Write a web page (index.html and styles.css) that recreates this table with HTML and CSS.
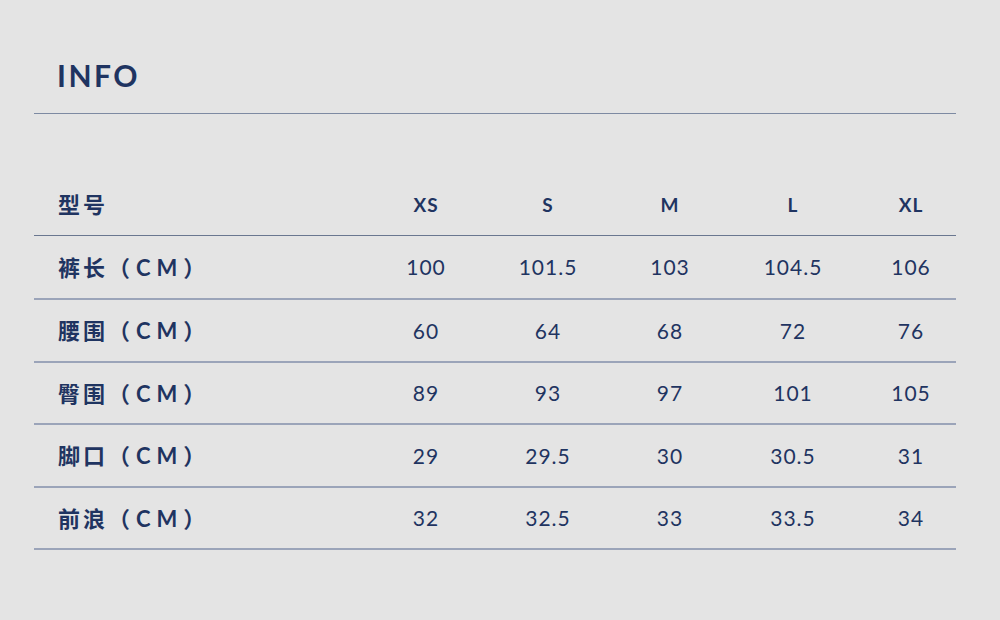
FILE: index.html
```html
<!DOCTYPE html>
<html lang="zh-CN">
<head>
<meta charset="utf-8">
<title>INFO</title>
<link rel="stylesheet" href="styles.css">
</head>
<body>
<main class="page">
  <header class="title-bar">
    <h1 class="title">INFO</h1>
  </header>
  <section class="table">
    <div class="row head">
      <div class="cell label">型号</div>
      <div class="cell">XS</div>
      <div class="cell">S</div>
      <div class="cell">M</div>
      <div class="cell">L</div>
      <div class="cell last">XL</div>
    </div>
    <div class="row">
      <div class="cell label">裤长<span class="unit">（CM）</span></div>
      <div class="cell">100</div>
      <div class="cell">101.5</div>
      <div class="cell">103</div>
      <div class="cell">104.5</div>
      <div class="cell last">106</div>
    </div>
    <div class="row">
      <div class="cell label">腰围<span class="unit">（CM）</span></div>
      <div class="cell">60</div>
      <div class="cell">64</div>
      <div class="cell">68</div>
      <div class="cell">72</div>
      <div class="cell last">76</div>
    </div>
    <div class="row">
      <div class="cell label">臀围<span class="unit">（CM）</span></div>
      <div class="cell">89</div>
      <div class="cell">93</div>
      <div class="cell">97</div>
      <div class="cell">101</div>
      <div class="cell last">105</div>
    </div>
    <div class="row">
      <div class="cell label">脚口<span class="unit">（CM）</span></div>
      <div class="cell">29</div>
      <div class="cell">29.5</div>
      <div class="cell">30</div>
      <div class="cell">30.5</div>
      <div class="cell last">31</div>
    </div>
    <div class="row">
      <div class="cell label">前浪<span class="unit">（CM）</span></div>
      <div class="cell">32</div>
      <div class="cell">32.5</div>
      <div class="cell">33</div>
      <div class="cell">33.5</div>
      <div class="cell last">34</div>
    </div>
  </section>
</main>
</body>
</html>
```

FILE: styles.css
```css
html, body {
  margin: 0;
  padding: 0;
  background: #e4e4e4;
}

body {
  font-family: Lato, "Noto Sans CJK SC", sans-serif;
  color: #1f3461;
}

.page {
  width: 922px;
  margin-left: 34px;
  padding-top: 57px;
}

.title-bar {
  padding: 0 0 20px 23px;
  border-bottom: 1px solid #7d8aa2;
}

.title {
  margin: 0;
  font-size: 30px;
  line-height: 36px;
  font-weight: 700;
  letter-spacing: 2.5px;
}

.table {
  margin-top: 60px;
}

.row {
  display: grid;
  grid-template-columns: 332px 120px 124px 120px 126px 100px;
  height: 60px;
  align-items: center;
  border-bottom: 2px solid #9ba4b9;
}

.row.head {
  height: 61px;
  border-bottom: 1px solid #6a7790;
}

.row:nth-child(2) {
  height: 62px;
}

.row:nth-child(3),
.row:nth-child(5) {
  height: 61px;
}

.cell {
  text-align: center;
  font-size: 21px;
  font-weight: 400;
  letter-spacing: 1px;
  padding-bottom: 1px;
}

.cell.last {
  padding-left: 10px;
}

.head .cell {
  font-weight: 700;
  font-size: 19px;
  padding-bottom: 0;
}

.cell.label {
  text-align: left;
  padding: 0 0 3px 24px;
  font-weight: 700;
  font-size: 22px;
  letter-spacing: 3px;
}

.unit {
  letter-spacing: 6px;
}
```
